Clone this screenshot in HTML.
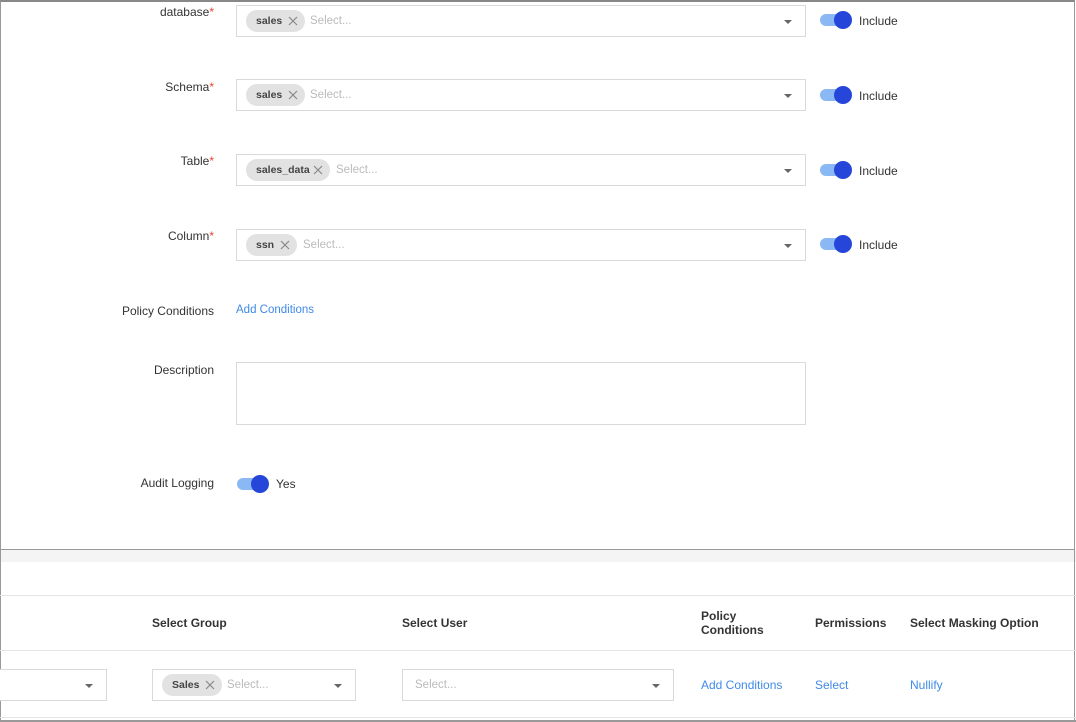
<!DOCTYPE html>
<html><head><style>
*{box-sizing:border-box;margin:0;padding:0}
body{width:1076px;height:722px;background:#fff;font-family:"Liberation Sans",sans-serif;position:relative;overflow:hidden;color:#333}
.a{position:absolute}
.lbl{position:absolute;font-size:12px;color:#333;text-align:right;width:200px}
.lbl b{color:#e8452c;font-weight:normal}
.box{position:absolute;border:1px solid #d9d9d9;background:#fff;height:32px}
.chip{position:absolute;top:4px;height:22px;background:#e2e2e2;border-radius:11px;font-size:10.5px;font-weight:bold;color:#444;line-height:22px;padding-left:10px}
.chip svg{position:absolute;right:7px;top:6px}
.ph{position:absolute;top:9px;font-size:11.5px;color:#bbb}
.caret{position:absolute;width:0;height:0;border-left:4px solid transparent;border-right:4px solid transparent;border-top:4px solid #666;top:14px}
.tg{position:absolute;width:30px;height:12px;border-radius:6px;background:#8ab8f5}
.tg:after{content:"";position:absolute;right:-2px;top:-3px;width:18px;height:18px;border-radius:50%;background:#2546d8}
.tt{position:absolute;font-size:12px;color:#333}
.link{position:absolute;font-size:12px;color:#3f8ae8}
.hd{position:absolute;font-size:12px;font-weight:bold;color:#333}
.hl{position:absolute;left:0;width:1076px;height:1px;background:#e6e6e6}
</style></head><body>
<div class="a" style="left:0;top:0;width:1075px;height:550px;border:1px solid #999;border-top:2px solid #888"></div>

<div class="lbl" style="left:14px;top:5px">database<b>*</b></div>
<div class="box" style="left:236px;top:5px;width:570px"><div class="chip" style="left:9px;width:59px">sales<svg width="10" height="10"><path d="M1 1L9 9M9 1L1 9" stroke="#888" stroke-width="1.2"/></svg></div><div class="ph" style="left:73px">Select...</div><div class="caret" style="left:547px"></div></div>
<div class="tg" style="left:820px;top:14px"></div><div class="tt" style="left:859px;top:14px">Include</div>

<div class="lbl" style="left:14px;top:80px">Schema<b>*</b></div>
<div class="box" style="left:236px;top:79px;width:570px"><div class="chip" style="left:9px;width:59px">sales<svg width="10" height="10"><path d="M1 1L9 9M9 1L1 9" stroke="#888" stroke-width="1.2"/></svg></div><div class="ph" style="left:73px">Select...</div><div class="caret" style="left:547px"></div></div>
<div class="tg" style="left:820px;top:89px"></div><div class="tt" style="left:859px;top:89px">Include</div>

<div class="lbl" style="left:14px;top:154px">Table<b>*</b></div>
<div class="box" style="left:236px;top:154px;width:570px"><div class="chip" style="left:9px;width:84px">sales_data<svg width="10" height="10"><path d="M1 1L9 9M9 1L1 9" stroke="#888" stroke-width="1.2"/></svg></div><div class="ph" style="left:99px">Select...</div><div class="caret" style="left:547px"></div></div>
<div class="tg" style="left:820px;top:164px"></div><div class="tt" style="left:859px;top:164px">Include</div>

<div class="lbl" style="left:14px;top:229px">Column<b>*</b></div>
<div class="box" style="left:236px;top:229px;width:570px"><div class="chip" style="left:9px;width:51px">ssn<svg width="10" height="10"><path d="M1 1L9 9M9 1L1 9" stroke="#888" stroke-width="1.2"/></svg></div><div class="ph" style="left:66px">Select...</div><div class="caret" style="left:547px"></div></div>
<div class="tg" style="left:820px;top:238px"></div><div class="tt" style="left:859px;top:238px">Include</div>

<div class="lbl" style="left:14px;top:304px">Policy Conditions</div>
<div class="link" style="left:236px;top:304px;font-size:11.5px">Add Conditions</div>

<div class="lbl" style="left:14px;top:363px">Description</div>
<div class="box" style="left:236px;top:362px;width:570px;height:63px"></div>

<div class="lbl" style="left:14px;top:476px">Audit Logging</div>
<div class="tg" style="left:237px;top:478px"></div><div class="tt" style="left:276px;top:477px">Yes</div>

<div class="a" style="left:0;top:550px;width:1076px;height:12px;background:#f4f4f4"></div>
<div class="a" style="left:0;top:550px;width:1px;height:172px;background:#999"></div>
<div class="a" style="left:1074px;top:550px;width:1px;height:172px;background:#999"></div>
<div class="hl" style="top:595px"></div>
<div class="hl" style="top:650px"></div>
<div class="hl" style="top:717px"></div>
<div class="a" style="left:0;top:720px;width:1076px;height:2px;background:#999"></div>

<div class="hd" style="left:152px;top:616px">Select Group</div>
<div class="hd" style="left:402px;top:616px">Select User</div>
<div class="hd" style="left:701px;top:609px;line-height:14px">Policy<br>Conditions</div>
<div class="hd" style="left:815px;top:616px">Permissions</div>
<div class="hd" style="left:910px;top:616px">Select Masking Option</div>

<div class="box" style="left:-2px;top:669px;width:109px"><div class="caret" style="left:86px"></div></div>
<div class="box" style="left:152px;top:669px;width:204px"><div class="chip" style="left:9px;width:60px">Sales<svg width="10" height="10"><path d="M1 1L9 9M9 1L1 9" stroke="#888" stroke-width="1.2"/></svg></div><div class="ph" style="left:74px">Select...</div><div class="caret" style="left:181px"></div></div>
<div class="box" style="left:402px;top:669px;width:272px"><div class="ph" style="left:12px">Select...</div><div class="caret" style="left:249px"></div></div>
<div class="link" style="left:701px;top:678px">Add Conditions</div>
<div class="link" style="left:815px;top:678px">Select</div>
<div class="link" style="left:910px;top:678px">Nullify</div>
</body></html>
